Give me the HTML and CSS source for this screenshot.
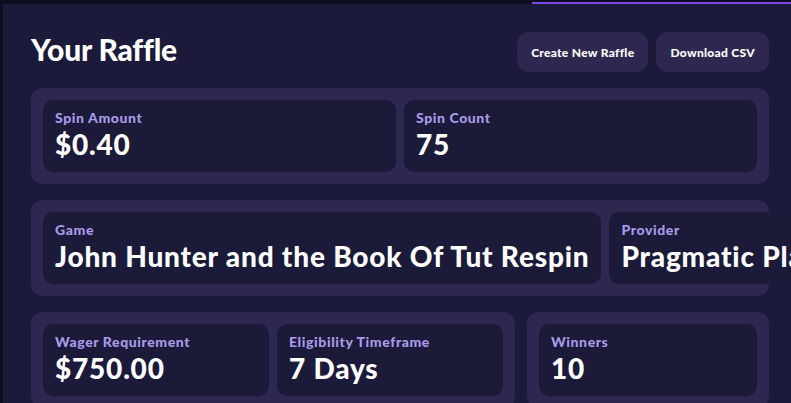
FILE: index.html
```html
<!DOCTYPE html>
<html lang="en">
<head>
<meta charset="utf-8">
<title>Your Raffle</title>
<link rel="stylesheet" href="styles.css">
</head>
<body>
<div class="topline"></div>
<main class="panel">
  <header class="head">
    <h1 class="title">Your Raffle</h1>
    <div class="actions">
      <button class="btn">Create New Raffle</button>
      <button class="btn">Download CSV</button>
    </div>
  </header>

  <section class="group grid-2">
    <div class="stat"><div class="label">Spin Amount</div><div class="value">$0.40</div></div>
    <div class="stat"><div class="label">Spin Count</div><div class="value">75</div></div>
  </section>

  <section class="group row">
    <div class="stat"><div class="label">Game</div><div class="value">John Hunter and the Book Of Tut Respin</div></div>
    <div class="stat"><div class="label">Provider</div><div class="value">Pragmatic Play</div></div>
  </section>

  <div class="split">
    <section class="group grid-2">
      <div class="stat"><div class="label">Wager Requirement</div><div class="value">$750.00</div></div>
      <div class="stat"><div class="label">Eligibility Timeframe</div><div class="value">7 Days</div></div>
    </section>
    <section class="group grid-1">
      <div class="stat"><div class="label">Winners</div><div class="value">10</div></div>
    </section>
  </div>
</main>
</body>
</html>
```

FILE: styles.css
```css
* { box-sizing: border-box; }
html, body { margin: 0; height: 100%; overflow: hidden; }
body {
  background: #0c0d20;
  padding: 4px 0 0 3px;
  font-family: Lato, "Noto Sans", sans-serif;
  color: #fff;
}
.topline {
  position: absolute;
  top: 2px;
  left: 532px;
  right: 0;
  height: 2px;
  background: #7b4ae6;
}
.panel {
  background: #1b1a3a;
  min-height: 100%;
  padding: 28px 22px 28px 28px;
  display: flex;
  flex-direction: column;
  gap: 16px;
}
.head {
  display: flex;
  align-items: center;
  justify-content: space-between;
  height: 40px;
}
.title {
  margin: 0;
  font-size: 30px;
  font-weight: 900;
  letter-spacing: -0.2px;
  position: relative;
  top: -3px;
}
.actions { display: flex; gap: 8px; }
.btn {
  font-family: Lato, "Noto Sans", sans-serif;
  font-weight: 900;
  font-size: 12px;
  letter-spacing: 0.3px;
  color: #fff;
  background: #2e2850;
  border: 0;
  border-radius: 12px;
  height: 40px;
  padding: 0 14px;
}
.group {
  background: #2e2850;
  border-radius: 12px;
  padding: 12px;
  gap: 8px;
}
.grid-2 { display: grid; grid-template-columns: 1fr 1fr; }
.grid-1 { display: grid; grid-template-columns: 1fr; }
.row { display: flex; }
.row .stat { flex: 0 0 auto; white-space: nowrap; }
.split {
  display: grid;
  grid-template-columns: 2fr 1fr;
  gap: 12px;
}
.stat {
  background: #1b1a39;
  border-radius: 10px;
  padding: 9px 12px 11px;
  height: 72px;
}
.label {
  color: #a99be8;
  font-size: 14px;
  font-weight: 900;
  letter-spacing: 0.6px;
  line-height: 18px;
}
.value {
  font-size: 28px;
  font-weight: 900;
  letter-spacing: 0.8px;
  line-height: 34px;
}
```
